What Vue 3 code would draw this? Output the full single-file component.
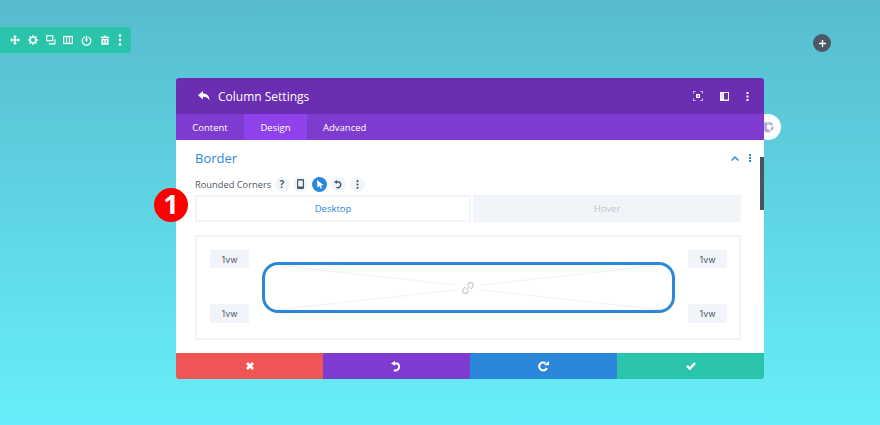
<script setup>
const corners = ['1vw', '1vw']
</script>

<template>
  <div class="page">
    <div class="top-row">
      <div class="toolbar">
        <svg width="10" height="10" viewBox="0 0 14 14"><path fill="#fff" d="M7 0 10 3H8V6H11V4L14 7 11 10V8H8V11H10L7 14 4 11H6V8H3V10L0 7 3 4V6H6V3H4Z"/></svg>
        <svg width="10" height="10" viewBox="0 0 14 14"><circle cx="7" cy="7" r="4" fill="none" stroke="#fff" stroke-width="2"/><path stroke="#fff" stroke-width="2" d="M7 0V3M7 11V14M0 7H3M11 7H14M2 2 4 4M10 10 12 12M12 2 10 4M4 10 2 12"/></svg>
        <svg width="10" height="10" viewBox="0 0 14 14" fill="none" stroke="#fff" stroke-width="1.6"><rect x="1" y="1" width="8.5" height="7"/><path d="M12.5 6V12.5H4"/></svg>
        <svg width="10" height="10" viewBox="0 0 14 14" fill="none" stroke="#fff" stroke-width="1.6"><rect x="1" y="2" width="12" height="10"/><path d="M5 2V12M9 2V12"/></svg>
        <svg width="11" height="11" viewBox="0 0 14 14" fill="none" stroke="#fff" stroke-width="1.6"><path d="M4.5 2.5A5.5 5.5 0 1 0 9.5 2.5"/><path stroke-width="2" d="M7 1V7"/><path fill="#fff" stroke="none" d="M4.8 6H9.2L7 9Z"/></svg>
        <svg width="10" height="10" viewBox="0 0 14 14" fill="#fff"><path d="M1 2.5H5V1H9V2.5H13V4.5H1Z"/><path d="M2 5.5H12V13.5H2ZM4.5 7.5V11.5H6V7.5ZM8 7.5V11.5H9.5V7.5Z" fill-rule="evenodd"/></svg>
        <svg width="4" height="12" viewBox="0 0 4 12" fill="#fff"><circle cx="2" cy="1.6" r="1.4"/><circle cx="2" cy="6" r="1.4"/><circle cx="2" cy="10.4" r="1.4"/></svg>
      </div>
      <div class="add-btn">
        <svg width="7" height="7" viewBox="0 0 8 8"><path stroke="#fff" stroke-width="1.6" d="M4 0V8M0 4H8"/></svg>
      </div>
    </div>

    <div class="modal">
      <div class="side-btn">
        <svg width="12" height="12" viewBox="0 0 12 12"><circle cx="6" cy="6" r="5.5" fill="#b9a9d6"/><circle cx="7" cy="6" r="2.4" fill="#fff"/><path stroke="#fff" stroke-width="1.2" d="M6 0V3M12 4 8 6M10 11 7 8"/></svg>
      </div>
      <div class="step-badge">1</div>
      <div class="scrollbar"></div>

      <header class="head">
        <svg class="back" width="12" height="10" viewBox="0 0 12 10"><path fill="#fff" d="M5 0V2.4C9 2.4 11.5 4.6 11.5 9.6 10.4 7.2 8.6 5.8 5 5.8V8.4L0 4.2Z"/></svg>
        <span class="title">Column Settings</span>
        <span class="head-actions">
          <svg width="10" height="10" viewBox="0 0 10 10" fill="none" stroke="#d9c9f0"><path d="M.5 2.5V.5H2.5M7.5.5H9.5V2.5M9.5 7.5V9.5H7.5M2.5 9.5H.5V7.5"/><rect x="3" y="3" width="4" height="4" fill="#fff" stroke="none"/><rect x="4.4" y="4.4" width="1.4" height="1.4" fill="#6b2eb3" stroke="none"/></svg>
          <svg width="9" height="9" viewBox="0 0 9 9"><path fill="#fff" fill-rule="evenodd" d="M0 0H9V9H0ZM4 1V7.5H8V1Z"/><path stroke="#6b2eb3" stroke-width=".8" stroke-dasharray="1 1" d="M2 1.5V7"/></svg>
          <svg width="3" height="9" viewBox="0 0 3 9" fill="#fff"><rect x=".5" y="0" width="2" height="2"/><rect x=".5" y="3.5" width="2" height="2"/><rect x=".5" y="7" width="2" height="2"/></svg>
        </span>
      </header>

      <nav class="tabs">
        <span class="tab">Content</span>
        <span class="tab active">Design</span>
        <span class="tab">Advanced</span>
      </nav>

      <section class="body">
        <div class="section-head">
          <h2>Border</h2>
          <span class="section-actions">
            <svg width="8" height="5" viewBox="0 0 8 5" fill="none" stroke="#2b87da" stroke-width="1.4"><path d="M.6 4.4 4 1 7.4 4.4"/></svg>
            <svg width="2" height="8" viewBox="0 0 2 8" fill="#2b87da"><rect width="2" height="2"/><rect y="3" width="2" height="2"/><rect y="6" width="2" height="2"/></svg>
          </span>
        </div>

        <div class="label-row">
          <span class="label">Rounded Corners</span>
          <span class="chips">
            <span class="chip"><span class="q">?</span></span>
            <span class="chip">
              <svg width="7" height="10" viewBox="0 0 7 10"><path fill="#4c5866" fill-rule="evenodd" d="M1 0H6Q7 0 7 1V9Q7 10 6 10H1Q0 10 0 9V1Q0 0 1 0ZM1.2 1.4V7.6H5.8V1.4Z"/></svg>
            </span>
            <span class="chip on">
              <svg width="8" height="9" viewBox="0 0 8 9"><path fill="#fff" d="M1 0 7.5 5 4.8 5.4 6 8.2 4.8 8.8 3.6 6 1.4 7.6Z"/></svg>
            </span>
            <span class="chip">
              <svg width="9" height="9" viewBox="0 0 10 10" fill="none" stroke="#4c5866" stroke-width="1.7"><path d="M3 2.2H5.6A3.1 3.1 0 1 1 2.6 8.2"/><path fill="#4c5866" stroke="none" d="M3.4 0V4.4L0 2.2Z"/></svg>
            </span>
            <span class="chip">
              <svg width="3" height="9" viewBox="0 0 3 9" fill="#4c5866"><circle cx="1.5" cy="1.2" r="1.1"/><circle cx="1.5" cy="4.5" r="1.1"/><circle cx="1.5" cy="7.8" r="1.1"/></svg>
            </span>
          </span>
        </div>

        <div class="device-tabs">
          <span class="device current">Desktop</span>
          <span class="device">Hover</span>
        </div>

        <div class="corner-box">
          <div class="corner-col">
            <span v-for="(c, i) in corners" :key="i" class="val">{{ c }}</span>
          </div>
          <div class="preview">
            <svg class="cross" viewBox="0 0 407 45" preserveAspectRatio="none" fill="none" stroke="#eef1f7" stroke-width="1">
              <path d="M10 0 192 20M10 45 192 25M397 0 215 20M397 45 215 25"/>
            </svg>
            <svg class="link" width="12" height="12" viewBox="0 0 12 12" fill="none" stroke="#c3c8d2" stroke-width="1.2"><path d="M5 3.4 6.9 1.5A2 2 0 0 1 10.5 5.1L8.6 7M7 8.6 5.1 10.5A2 2 0 0 1 1.5 6.9L3.4 5M4.2 7.8 7.8 4.2"/></svg>
          </div>
          <div class="corner-col">
            <span v-for="(c, i) in corners" :key="i" class="val">{{ c }}</span>
          </div>
        </div>
      </section>

      <footer class="foot">
        <button class="red">
          <svg width="8" height="8" viewBox="0 0 8 8"><path stroke="#fff" stroke-width="2.6" d="M1 1 7 7M7 1 1 7"/></svg>
        </button>
        <button class="purple">
          <svg width="11" height="11" viewBox="0 0 10 10" fill="none" stroke="#fff" stroke-width="1.8"><path d="M3 2.2H5.6A3.1 3.1 0 1 1 2.6 8.2"/><path fill="#fff" stroke="none" d="M3.6 0V4.4L0 2.2Z"/></svg>
        </button>
        <button class="blue">
          <svg width="11" height="11" viewBox="0 0 10 10" fill="none" stroke="#fff" stroke-width="1.9"><path d="M8 6.4A3.6 3.6 0 1 1 6.8 2"/><path fill="#fff" stroke="none" d="M5.4 3.8H10V0Z"/></svg>
        </button>
        <button class="green">
          <svg width="10" height="8" viewBox="0 0 10 8" fill="none" stroke="#fff" stroke-width="2.4"><path d="M1 4 3.8 6.6 9 1.2"/></svg>
        </button>
      </footer>
    </div>
  </div>
</template>

<style>
html, body { margin: 0; }
</style>

<style scoped>
.page {
  width: 880px;
  height: 425px;
  overflow: hidden;
  box-sizing: border-box;
  padding-top: 27px;
  background: linear-gradient(180deg, #57bccd 0%, #68eefa 100%);
  font-family: "Open Sans", "Liberation Sans", sans-serif;
}
.top-row {
  display: flex;
  justify-content: space-between;
  align-items: flex-start;
  height: 26px;
  padding-right: 49px;
  margin-bottom: 25px;
}
.toolbar {
  width: 131px;
  height: 26px;
  box-sizing: border-box;
  padding: 0 9px 0 10px;
  display: flex;
  align-items: center;
  justify-content: space-between;
  background: #29c4a9;
  border-radius: 0 3px 3px 0;
}
.add-btn {
  width: 18px;
  height: 18px;
  margin-top: 7px;
  border-radius: 50%;
  background: #4c5866;
  display: flex;
  align-items: center;
  justify-content: center;
}
.modal {
  position: relative;
  width: 588px;
  margin-left: 176px;
  border-radius: 3px;
}
.side-btn {
  position: absolute;
  left: 579px;
  top: 36px;
  width: 26px;
  height: 26px;
  border-radius: 50%;
  background: #fff;
  display: flex;
  align-items: center;
  justify-content: center;
}
.step-badge {
  position: absolute;
  left: -22px;
  top: 110px;
  width: 34px;
  height: 34px;
  border-radius: 50%;
  background: #f00;
  color: #fff;
  font: 700 27px/31px "Open Sans", sans-serif;
  text-align: center;
  z-index: 2;
}
.scrollbar {
  position: absolute;
  right: 0;
  top: 79px;
  width: 4px;
  height: 53px;
  background: #4a5460;
  z-index: 2;
}
.head {
  position: relative;
  height: 36px;
  display: flex;
  align-items: center;
  padding: 0 15px 0 22px;
  background: #6b2eb3;
  border-radius: 3px 3px 0 0;
  color: #fff;
}
.back { margin-right: 8px; }
.title {
  font-size: 12px;
  font-weight: 500;
}
.head-actions {
  margin-left: auto;
  display: flex;
  align-items: center;
  gap: 17px;
}
.tabs {
  position: relative;
  height: 26px;
  display: flex;
  background: #7d3bcf;
  color: #fff;
  font-size: 9.5px;
  font-weight: 500;
}
.tab {
  display: flex;
  align-items: center;
  justify-content: center;
  padding: 0 16px;
}
.tab:first-child { width: 68px; padding: 0; }
.tab.active { width: 63px; padding: 0; background: #8f42ec; }
.body {
  position: relative;
  height: 213px;
  box-sizing: border-box;
  padding: 0 23px 0 19px;
  background: #fff;
}
.section-head {
  display: flex;
  align-items: center;
  justify-content: space-between;
  height: 36px;
  margin-right: -10px;
}
.section-head h2 {
  margin: 0;
  font-size: 13px;
  font-weight: 500;
  color: #2b87da;
}
.section-actions {
  display: flex;
  align-items: center;
  gap: 10px;
}
.label-row {
  display: flex;
  align-items: center;
  height: 16px;
}
.label {
  font-size: 9.3px;
  font-weight: 500;
  color: #4c5866;
  width: 79.5px;
}
.chips {
  display: flex;
  gap: 3.8px;
}
.chip {
  width: 15px;
  height: 15px;
  border-radius: 50%;
  background: #f1f5f9;
  display: flex;
  align-items: center;
  justify-content: center;
}
.chip.on { background: #2b87da; }
.q {
  font-size: 10px;
  font-weight: 700;
  color: #4c5866;
  line-height: 1;
}
.device-tabs {
  display: flex;
  gap: 2px;
  height: 27px;
  margin-top: 3px;
}
.device {
  flex: 1;
  display: flex;
  align-items: center;
  justify-content: center;
  background: #f1f5f9;
  font-size: 9.5px;
  font-weight: 500;
  color: #bfc5cd;
}
.device.current {
  flex: 0 0 276px;
  box-sizing: border-box;
  background: #fff;
  border: 2px solid #f1f5f9;
  color: #2b87da;
}
.corner-box {
  margin-top: 13px;
  height: 105px;
  box-sizing: border-box;
  border: 2px solid #f1f5f9;
  display: flex;
  align-items: center;
  padding: 0 12px 0 13px;
  justify-content: space-between;
}
.corner-col {
  display: flex;
  flex-direction: column;
  gap: 36px;
  margin-top: -2px;
}
.val {
  width: 39px;
  height: 18px;
  background: #f1f5f9;
  font-family: "Inter", "Open Sans", sans-serif;
  font-size: 9px;
  color: #4c5866;
  display: flex;
  align-items: center;
  justify-content: center;
}
.val:last-child { height: 19px; }
.preview {
  position: relative;
  width: 413px;
  height: 51px;
  box-sizing: border-box;
  border: 3px solid #2b87da;
  border-radius: 16px;
}
.cross {
  position: absolute;
  inset: 0;
  width: 100%;
  height: 100%;
}
.link {
  position: absolute;
  left: 197px;
  top: 17px;
}
.foot {
  display: flex;
  height: 26px;
}
.foot button {
  flex: 1;
  border: 0;
  padding: 0;
  display: flex;
  align-items: center;
  justify-content: center;
}
.red { background: #ef5555; border-bottom-left-radius: 3px; }
.purple { background: #7d3bcf; }
.blue { background: #2b87da; }
.green { background: #29c4a9; border-bottom-right-radius: 3px; }
</style>
